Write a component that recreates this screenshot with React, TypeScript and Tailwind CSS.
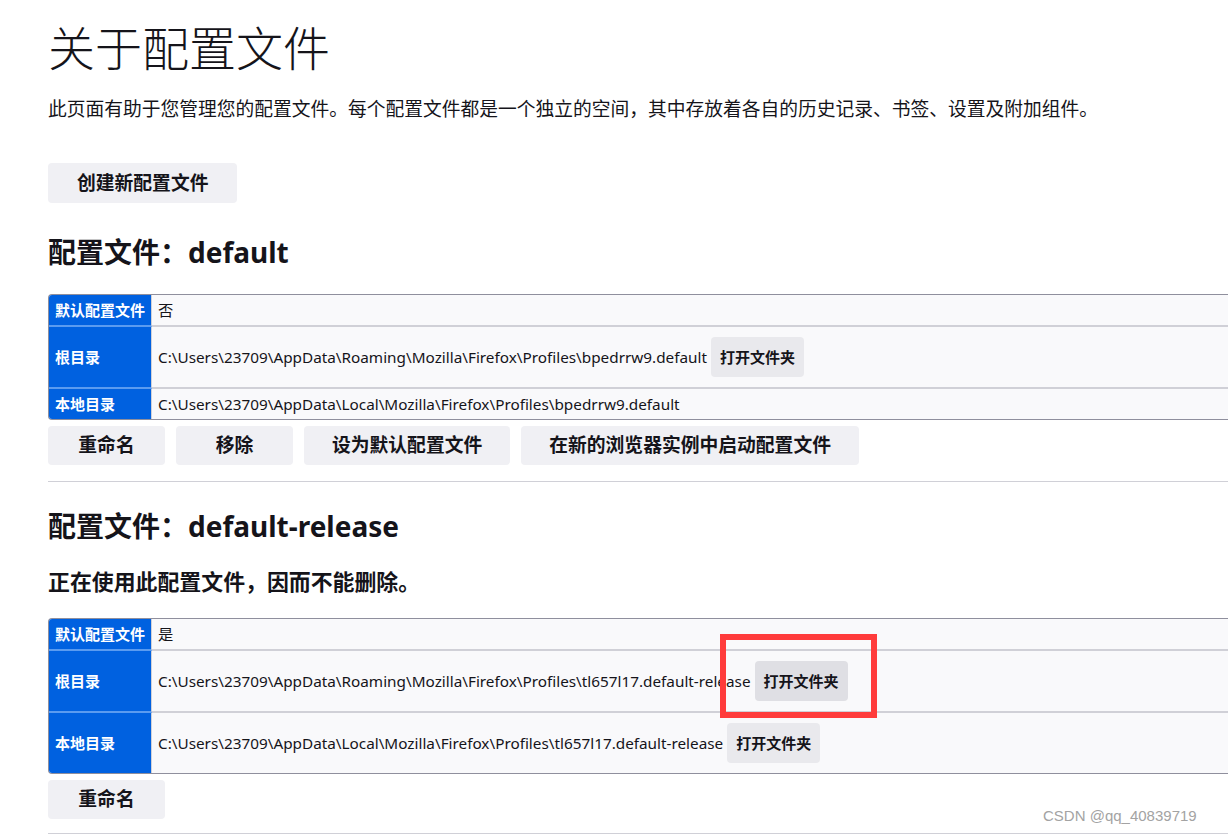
import React from "react";

const font = "font-['Noto_Sans','Noto_Sans_CJK_SC',sans-serif]";

type Row = { label: string; value: string; folder?: boolean; hot?: boolean };

function Btn({ children }: { children: React.ReactNode }) {
  return (
    <button className="h-[39px] min-w-[117px] px-[28px] rounded-[4px] bg-[#f0f0f4] text-[18.8px] font-bold text-[#15141a] leading-none">
      {children}
    </button>
  );
}

function ProfileTable({ rows }: { rows: Row[] }) {
  return (
    <table className="w-[1300px] border-separate border-spacing-0 border border-r-0 border-[#8f8f9d] rounded-tl-[4px] rounded-bl-[4px] overflow-hidden text-[15px]">
      <tbody>
        {rows.map((r, i) => {
          const last = i === rows.length - 1;
          return (
            <tr key={i}>
              <th
                className={`bg-[#0061e0] text-white font-bold text-left whitespace-nowrap px-[6px] py-[4px] leading-[22px] border-r border-[#d0d0d7] ${
                  last ? "" : "border-b-2 border-b-[#5a9bf0]"
                }`}
              >
                {r.label}
              </th>
              <td
                className={`bg-[#f9f9fb] px-[6px] py-[4px] leading-[22px] w-full ${
                  last ? "" : "border-b-2 border-b-[#d0d0d7]"
                }`}
              >
                <div className="flex items-center">
                  <span className="whitespace-nowrap text-[15.3px]">{r.value}</span>
                  {r.folder && (
                    <button
                      className={`ml-[4px] my-[6px] h-[40px] px-[9px] rounded-[4px] text-[15px] font-bold text-[#15141a] ${
                        r.hot ? "bg-[#dfdfe4]" : "bg-[#e9e9ed]"
                      }`}
                    >
                      打开文件夹
                    </button>
                  )}
                </div>
              </td>
            </tr>
          );
        })}
      </tbody>
    </table>
  );
}

export default function App() {
  return (
    <div className={`relative h-screen overflow-hidden bg-white text-[#15141a] ${font}`}>
      <div className="pl-12 pt-[18px]">
        <h1 className="text-[47px] font-light leading-[60px]">关于配置文件</h1>
        <p className="mt-[18px] text-[18.75px] leading-[26px]">
          此页面有助于您管理您的配置文件。每个配置文件都是一个独立的空间，其中存放着各自的历史记录、书签、设置及附加组件。
        </p>
        <div className="mt-[41px]">
          <button className="h-[40px] px-[29px] rounded-[4px] bg-[#f0f0f4] text-[18.8px] font-bold leading-none">
            创建新配置文件
          </button>
        </div>

        <h2 className="mt-[31px] text-[28px] font-bold leading-[36px]">配置文件：default</h2>
        <div className="mt-[24px]">
          <ProfileTable
            rows={[
              { label: "默认配置文件", value: "否" },
              {
                label: "根目录",
                value: "C:\\Users\\23709\\AppData\\Roaming\\Mozilla\\Firefox\\Profiles\\bpedrrw9.default",
                folder: true,
              },
              {
                label: "本地目录",
                value: "C:\\Users\\23709\\AppData\\Local\\Mozilla\\Firefox\\Profiles\\bpedrrw9.default",
              },
            ]}
          />
        </div>
        <div className="mt-[6px] flex gap-[11px]">
          <Btn>重命名</Btn>
          <Btn>移除</Btn>
          <Btn>设为默认配置文件</Btn>
          <Btn>在新的浏览器实例中启动配置文件</Btn>
        </div>
        <div className="mt-[16px] h-px bg-[#d0d0d7]" />

        <h2 className="mt-[26px] text-[28px] font-bold leading-[36px]">配置文件：default-release</h2>
        <p className="mt-[23px] text-[21.9px] font-bold leading-[30px]">正在使用此配置文件，因而不能删除。</p>
        <div className="mt-[21px]">
          <ProfileTable
            rows={[
              { label: "默认配置文件", value: "是" },
              {
                label: "根目录",
                value: "C:\\Users\\23709\\AppData\\Roaming\\Mozilla\\Firefox\\Profiles\\tl657l17.default-release",
                folder: true,
                hot: true,
              },
              {
                label: "本地目录",
                value: "C:\\Users\\23709\\AppData\\Local\\Mozilla\\Firefox\\Profiles\\tl657l17.default-release",
                folder: true,
              },
            ]}
          />
        </div>
        <div className="mt-[6px] flex gap-[11px]">
          <Btn>重命名</Btn>
        </div>
        <div className="mt-[14px] h-px bg-[#d0d0d7]" />
      </div>

      <div className="absolute left-[720px] top-[634px] w-[157px] h-[84px] border-[6px] border-[#ff3b3b]" />
      <div className="absolute left-[1043px] top-[805px] text-[15px] leading-[22px] text-[#a3a3a3] font-['Liberation_Sans',sans-serif]">
        CSDN @qq_40839719
      </div>
    </div>
  );
}
